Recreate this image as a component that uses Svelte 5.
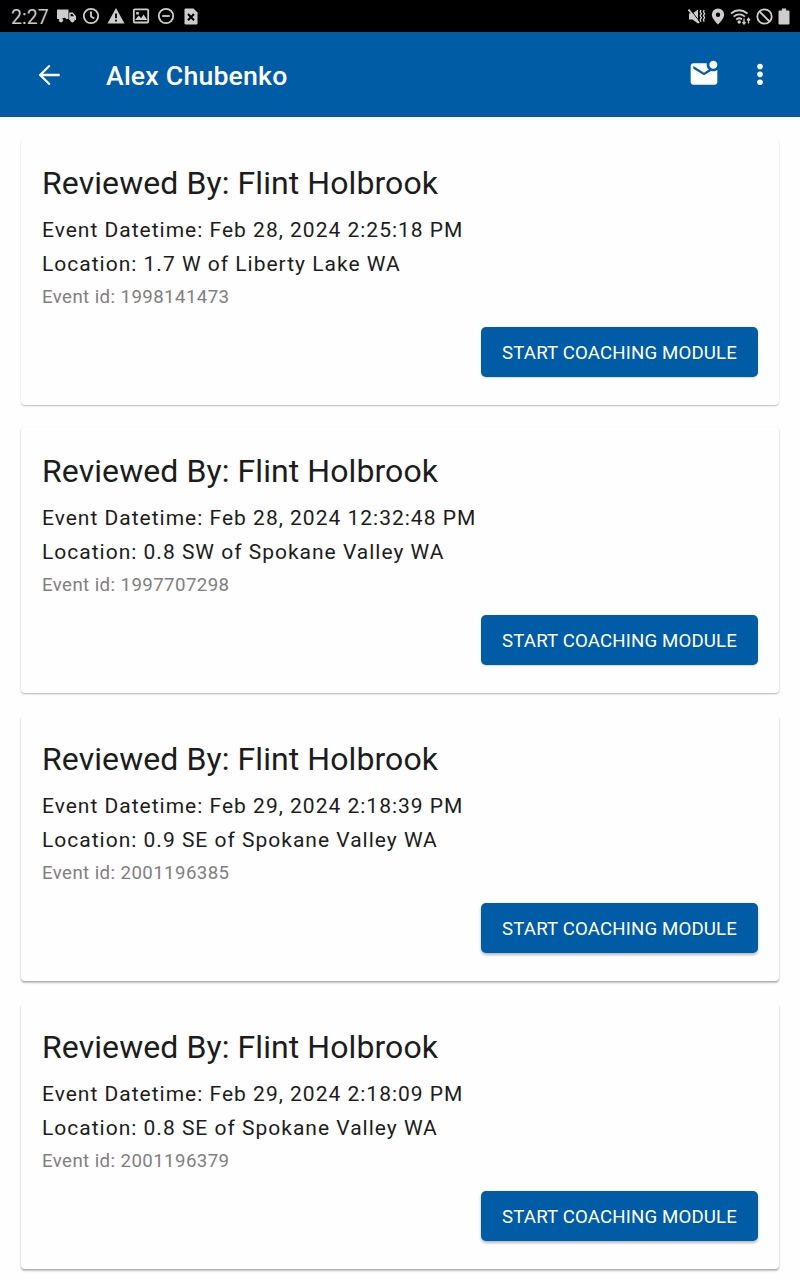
<script lang="ts">
	const events = [
		{ id: '1998141473', datetime: 'Feb 28, 2024 2:25:18 PM', location: '1.7 W of Liberty Lake WA' },
		{ id: '1997707298', datetime: 'Feb 28, 2024 12:32:48 PM', location: '0.8 SW of Spokane Valley WA' },
		{ id: '2001196385', datetime: 'Feb 29, 2024 2:18:39 PM', location: '0.9 SE of Spokane Valley WA' },
		{ id: '2001196379', datetime: 'Feb 29, 2024 2:18:09 PM', location: '0.8 SE of Spokane Valley WA' }
	];
	const driver = 'Alex Chubenko';
	const reviewer = 'Flint Holbrook';
</script>

<div class="screen">
	<div class="status-bar">
		<span class="clock">2:27</span>
		<div class="status-left">
			<!-- truck -->
			<svg width="19" height="16" viewBox="0 0 19 16">
				<path d="M0 1.500h11.500V11H9.200a2.400 2.400 0 0 0-4.200 0H0zM12.200 4.500h3.600l3.200 3.700V12h-1.200a2.400 2.400 0 0 0-4.300 0h-1.300z" />
				<circle cx="4" cy="12.300" r="2.100" /><circle cx="15.400" cy="12.300" r="2.100" />
				<path d="M13.600 6h1.800l1.700 2.200h-3.500z" fill="#000" />
			</svg>
			<!-- clock -->
			<svg width="18" height="18" viewBox="0 0 18 18">
				<circle cx="9" cy="9" r="7.200" class="line" /><path d="M9 4.500v5l3.300 2" class="line" />
			</svg>
			<!-- warning -->
			<svg width="18" height="18" viewBox="0 0 18 18">
				<path d="M9 1l8.500 15.500H.5z" /><path d="M8.100 6.400h1.800v4.800H8.100zM8.100 12.700h1.800v1.800H8.100z" fill="#000" />
			</svg>
			<!-- picture -->
			<svg width="18" height="16" viewBox="0 0 18 16">
				<rect x="1.800" y="1.300" width="14.400" height="13.200" rx="1" class="line" />
				<path d="M3 12l3.700-4.400 2.400 2.600 2.500-3.800L15.300 12zM4.200 4h2.600v2.400H4.200z" />
			</svg>
			<!-- do not disturb -->
			<svg width="18" height="18" viewBox="0 0 18 18">
				<circle cx="9" cy="9" r="7.200" class="line" /><path d="M5.200 9h7.600" class="line" />
			</svg>
			<!-- file error -->
			<svg class="file" width="14" height="17" viewBox="0 0 14 17">
				<path d="M1.500.5h8l4 4v10.800q0 1.200-1.200 1.200H1.700Q.5 16.500.5 15.300V1.500Q.5.5 1.500.5z" />
				<path d="M4 6l6 6.300M10 6l-6 6.300" stroke="#000" stroke-width="2" fill="none" />
			</svg>
		</div>
		<div class="status-right">
			<!-- muted, vibrating -->
			<svg width="18" height="17" viewBox="0 0 18 17">
				<path d="M1 5.500h3.500L10 1.500v14L4.500 11.500H1z" />
				<path d="M1.300.500l10 12.500" stroke="#000" stroke-width="1" /><path d="M.5 1.500l10.500 13.500" class="line" />
				<path d="M13 2l-.8 1.700 1.200 2-1.200 2 1.200 2-1.200 2 .8 2M16.200 2l-.8 1.700 1.200 2-1.200 2 1.200 2-1.200 2 .8 2" class="thin" />
			</svg>
			<!-- location -->
			<svg width="14" height="17" viewBox="0 0 14 17">
				<path fill-rule="evenodd" d="M7 .5a6.200 6.200 0 0 0-6.200 6.200C.8 10.600 7 16.500 7 16.500s6.200-5.900 6.200-9.800A6.200 6.200 0 0 0 7 .5zm0 4a2.200 2.200 0 1 1 0 4.400 2.200 2.200 0 0 1 0-4.400z" />
			</svg>
			<!-- wifi -->
			<svg width="21" height="17" viewBox="0 0 21 17">
				<path d="M1 5.500q8-6.500 16.500 0M3.600 8.600q5.700-4.500 11.300 0M6.200 11.500q3.100-2.300 5.800-.2" class="line" />
				<circle cx="9.200" cy="14" r="1.700" />
				<path d="M14 10.500v5M12.500 14l1.500 2 1.500-2M18.500 15.500v-5M17 12.300l1.500-2 1.500 2" class="thin" />
			</svg>
			<!-- blocked -->
			<svg width="17" height="17" viewBox="0 0 17 17">
				<circle cx="8.500" cy="8.500" r="7.200" class="line" /><path d="M3.500 3.500l10 10" class="line" />
			</svg>
			<!-- battery -->
			<svg width="12" height="17" viewBox="0 0 12 17">
				<path d="M3.800.5h4.400v2h2.300q1 0 1 1v12q0 1-1 1h-9q-1 0-1-1v-12q0-1 1-1h2.300z" />
			</svg>
		</div>
	</div>

	<header class="app-bar">
		<button class="icon-button back" aria-label="Back">
			<svg width="32" height="32" viewBox="0 0 24 24">
				<path d="M20 11.100H7.500l5.600-5.600L12 4.300 4.200 12l7.800 7.700 1.200-1.200-5.700-5.600H20z" />
			</svg>
		</button>
		<h1>{driver}</h1>
		<button class="icon-button mail" aria-label="Messages">
			<svg width="32" height="32" viewBox="0 0 24 24">
				<path d="M22 8.980V18c0 1.100-.9 2-2 2H4c-1.100 0-2-.9-2-2V6c0-1.100.9-2 2-2h10.100c-.06.320-.1.660-.1 1 0 1.480.650 2.790 1.670 3.710L12 11 4 6v2l8 5 5.300-3.320c.540.2 1.100.320 1.700.320 1.130 0 2.160-.390 3-1.020zM16 5c0 1.660 1.340 3 3 3s3-1.340 3-3-1.340-3-3-3-3 1.340-3 3z" />
			</svg>
		</button>
		<button class="icon-button more" aria-label="More options">
			<svg width="32" height="32" viewBox="0 0 24 24">
				<circle cx="12" cy="5.600" r="2.100" /><circle cx="12" cy="11.500" r="2.100" /><circle cx="12" cy="17.400" r="2.100" />
			</svg>
		</button>
	</header>

	<main class="event-list">
		{#each events as event (event.id)}
			<article class="card">
				<h2>Reviewed By: {reviewer}</h2>
				<p class="detail">Event Datetime: {event.datetime}</p>
				<p class="detail">Location: {event.location}</p>
				<p class="event-id">Event id: {event.id}</p>
				<button class="start">START COACHING MODULE</button>
			</article>
		{/each}
	</main>
</div>

<style>
	:global(body) {
		margin: 0;
		background: #fefefe;
	}
	.screen {
		width: 800px;
		height: 1280px;
		overflow: hidden;
		font-family: Roboto, sans-serif;
		color: #1c1c1c;
		background: #fefefe;
	}
	button {
		border: none;
		padding: 0;
		font-family: inherit;
		cursor: pointer;
	}
	svg {
		display: block;
		flex: none;
	}
	.status-bar {
		display: flex;
		align-items: center;
		box-sizing: border-box;
		height: 32px;
		padding: 0 10px 0 11px;
		background: #000;
		color: #c8c8c8;
	}
	.status-bar svg {
		fill: #cdcdcd;
	}
	.status-bar .line {
		fill: none;
		stroke: #cdcdcd;
		stroke-width: 1.8;
	}
	.status-bar .thin {
		fill: none;
		stroke: #cdcdcd;
		stroke-width: 1.3;
	}
	.clock {
		width: 46px;
		padding-top: 3px;
		font-size: 19.5px;
		line-height: 29px;
	}
	.status-left,
	.status-right {
		display: flex;
		align-items: center;
		gap: 7px;
	}
	.status-left svg:first-child {
		margin-right: -1px;
	}
	.file {
		margin-left: 2px;
	}
	.status-right {
		margin-left: auto;
		gap: 5px;
	}
	.app-bar {
		display: flex;
		align-items: center;
		height: 85px;
		background: #005ca4;
	}
	.icon-button {
		background: none;
	}
	.icon-button svg {
		fill: #fff;
	}
	.back {
		margin-left: 33px;
	}
	.mail {
		margin-top: -2px;
	}
	.more {
		margin: 0 24px;
	}
	h1 {
		flex: 1;
		margin: 0 0 0 41px;
		padding-top: 2px;
		font-size: 26.67px;
		font-weight: 500;
		line-height: 36px;
		letter-spacing: 0.2px;
		color: #fff;
	}
	.event-list {
		display: flex;
		flex-direction: column;
		gap: 22px;
		padding: 22px 21px;
	}
	.card {
		display: flex;
		flex-direction: column;
		box-sizing: border-box;
		height: 266px;
		padding: 23px 21px 21px;
		border-radius: 4px;
		background: #fefefe;
		box-shadow: 0 1px 1px rgba(0, 0, 0, 0.1), 0 1px 2px rgba(0, 0, 0, 0.18);
	}
	/* shadows deepen towards the bottom of the screen */
	.card:nth-child(2) {
		box-shadow: 0 1px 2px rgba(0, 0, 0, 0.18), 0 1px 2px rgba(0, 0, 0, 0.14);
	}
	.card:nth-child(n + 3) {
		box-shadow: 0 2px 2px rgba(0, 0, 0, 0.22), 0 1px 2px rgba(0, 0, 0, 0.14);
	}
	h2 {
		margin: 0 0 8px;
		font-size: 32px;
		font-weight: 400;
		line-height: 43px;
		letter-spacing: 0.08px;
	}
	p {
		margin: 0;
	}
	.detail {
		font-size: 21px;
		line-height: 34px;
		letter-spacing: 1px;
	}
	.event-id {
		padding-top: 1px;
		font-size: 18.67px;
		line-height: 31px;
		letter-spacing: 0.41px;
		color: #808080;
	}
	.start {
		align-self: flex-end;
		width: 277px;
		height: 50px;
		margin-top: 14px;
		padding-top: 1px;
		border-radius: 5px;
		background: #005ca4;
		color: #fff;
		font-size: 18.67px;
		letter-spacing: 0.14px;
		box-shadow: 0 1px 2px rgba(0, 0, 0, 0.16);
	}
	.card:nth-child(n + 3) .start {
		box-shadow: 0 2px 3px rgba(0, 0, 0, 0.28);
	}
</style>
